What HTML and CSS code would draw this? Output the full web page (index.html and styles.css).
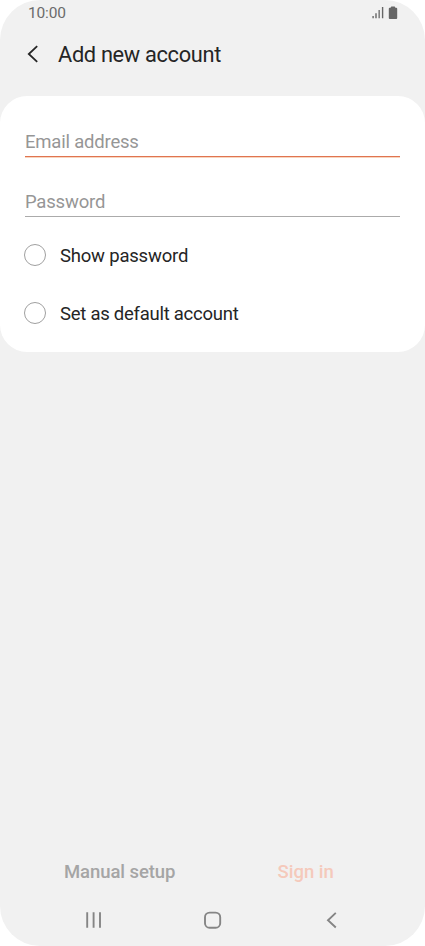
FILE: index.html
```html
<!DOCTYPE html>
<html lang="en">
<head>
<meta charset="utf-8">
<title>Add new account</title>
<link rel="stylesheet" href="styles.css">
</head>
<body>
<div class="screen">
  <div class="status">
    <span class="time">10:00</span>
    <svg class="indicators" width="26" height="14" viewBox="0 0 26 14" fill="#666">
      <path d="M.4 10h1.4v2.3H.4zM3.3 7.3h1.4v5H3.3zM6.5 4h1.3v8.3H6.5zM9.9 1h1.4v11.3H9.9z"/>
      <path d="M18.8 1.2q0-.8.8-.8h2.8q.8 0 .8.8v.6h1.1q.9 0 .9.9v9.4q0 .9-.9.9h-6.6q-.9 0-.9-.9V2.7q0-.9.9-.9h.9z"/>
    </svg>
  </div>
  <header class="header">
    <svg width="12" height="18" viewBox="0 0 12 18" fill="none" stroke="#252525" stroke-width="1.8"><path d="M11.2 1.2 2.8 9l8.4 7.8"/></svg>
    <h1 class="title">Add new account</h1>
  </header>
  <main class="card">
    <div class="field field-active"><span class="field-label">Email address</span></div>
    <div class="field"><span class="field-label">Password</span></div>
    <div class="option"><span class="radio"></span><span class="text-show">Show password</span></div>
    <div class="option"><span class="radio"></span><span class="text-default">Set as default account</span></div>
  </main>
  <div class="actions">
    <span class="manual">Manual setup</span>
    <span class="signin">Sign in</span>
  </div>
  <nav class="nav">
    <svg width="18" height="18" viewBox="0 0 18 18" fill="none" stroke="#858585" stroke-width="1.9"><path d="M2.2 1.2v15.6M8.6 1.2v15.6M15 1.2v15.6"/></svg>
    <svg width="18" height="18" viewBox="0 0 18 18" fill="none" stroke="#858585" stroke-width="1.9"><rect x="1" y="1.6" width="15.2" height="15.2" rx="4.6"/></svg>
    <svg width="18" height="18" viewBox="0 0 18 18" fill="none" stroke="#858585" stroke-width="1.9"><path d="M13.8 1.9 6 9.2l7.8 7.3"/></svg>
  </nav>
</div>
</body>
</html>
```
FILE: styles.css
```css
* { box-sizing: border-box; }
body { margin: 0; background: #fff; font-family: Roboto, sans-serif; color: #252525; }
.screen { width: 425px; height: 946px; background: #f1f1f1; border-radius: 40px; overflow: hidden; display: flex; flex-direction: column; }
.status { height: 26px; padding: 0 27px 0 28px; display: flex; justify-content: space-between; align-items: flex-start; }
.time { font-size: 15.5px; line-height: 18px; letter-spacing: -.15px; margin-top: 4px; color: #6b6b6b; }
.indicators { margin-top: 6px; }
.header { height: 69.5px; padding: 17px 0 0 26px; display: flex; align-items: flex-start; gap: 20px; }
.header svg { margin-top: 2px; }
.title { margin: 0; font-size: 21.8px; line-height: 24px; letter-spacing: -.33px; font-weight: 400; white-space: nowrap; }
.card { height: 256.5px; background: #fff; border-radius: 27px; padding: 25.5px 25px 0; }
.field { height: 36px; border-bottom: 1px solid #ababab; margin-bottom: 24px; display: flex; align-items: flex-end; padding-bottom: 2px; }
.field-active { border-bottom-color: #e07450; box-shadow: 0 1px #f8d5bf; }
.field-label { font-size: 18.5px; line-height: 24px; letter-spacing: -.2px; color: #969696; }
.option { height: 28px; display: flex; align-items: center; gap: 14px; margin-bottom: 30px; font-size: 18.5px; line-height: 24px; }
.option span:last-child { padding-top: 2px; }
.text-show { letter-spacing: -.2px; }
.text-default { letter-spacing: -.26px; }
.radio { width: 22px; height: 22px; margin-left: -1px; border: 1px solid #a0a0a0; border-radius: 50%; }
.actions { margin-top: auto; display: flex; font-size: 18.5px; font-weight: 500; line-height: 24px; padding-left: 64px; }
.manual { width: 213.5px; letter-spacing: -.08px; color: #a5a5a5; }
.signin { color: #f5c9bb; }
.nav { margin-top: 27px; margin-bottom: 17px; height: 18px; padding: 0 85px; display: flex; justify-content: space-between; }
```
